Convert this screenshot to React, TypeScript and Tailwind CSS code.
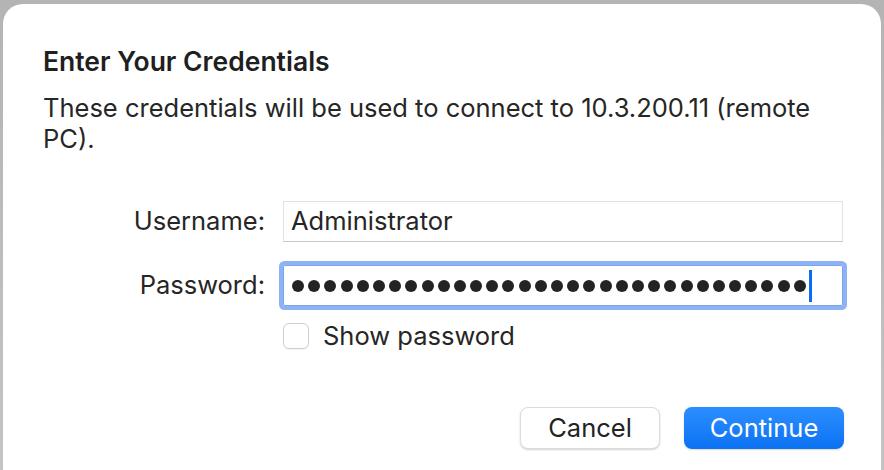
import React from 'react';

const font = { fontFamily: 'Inter, "Liberation Sans", sans-serif' };

const App: React.FC = () => {
  const dots = Array.from({ length: 32 });
  return (
    <div className="w-[884px] h-[470px] bg-gradient-to-b from-[#b4b4b4] to-[#c4c4c4] pt-[4px] px-[3px] overflow-hidden" style={font}>
      <div className="relative h-[480px] bg-white rounded-t-[20px] text-[#262626]">
        <div className="pl-[40px] pt-[41px]">
          <h1 className="text-[26.5px] leading-[32px] font-semibold text-[#1f1f1f]">Enter Your Credentials</h1>
          <p className="mt-[15px] text-[25.5px] leading-[31px] w-[790px]">
            These credentials will be used to connect to 10.3.200.11 (remote PC).
          </p>
        </div>

        <div className="mt-[47px] flex flex-col">
          <div className="flex items-center">
            <label className="w-[262px] text-right text-[25.5px]">Username:</label>
            <div className="ml-[18px] w-[560px] h-[41px] border border-[#e2e2e2] border-b-[#c8c8c8] flex items-center px-[7px] text-[25.5px]">
              Administrator
            </div>
          </div>

          <div className="flex items-center mt-[23px]">
            <label className="w-[262px] text-right text-[25.5px]">Password:</label>
            <div className="ml-[18px] w-[560px] h-[41px] border border-[#7aa5ec] ring-[4px] ring-[#8db3f6] rounded-[2px] flex items-center pl-[8px]">
              <div className="flex gap-[4.2px]">
                {dots.map((_, i) => (
                  <span key={i} className="block w-[12px] h-[12px] rounded-full bg-[#232323]" />
                ))}
              </div>
              <span className="block ml-[3px] w-[3px] h-[32px] bg-[#0a6cf5]" />
            </div>
          </div>

          <div className="flex items-center mt-[11px] ml-[280px]">
            <span className="block w-[26px] h-[26px] rounded-[6px] border border-[#cfcfcf] bg-white shadow-[0_1px_1px_rgba(0,0,0,0.05)]" />
            <span className="ml-[14px] text-[25.5px]">Show password</span>
          </div>
        </div>

        <div className="flex justify-end gap-[24px] mt-[52px] pr-[37px]">
          <button className="w-[140px] h-[42px] rounded-[8px] bg-white border border-[#dcdcdc] shadow-[0_1px_2px_rgba(0,0,0,0.18)] text-[25.5px] text-[#232323]">
            Cancel
          </button>
          <button className="w-[160px] h-[42px] rounded-[8px] bg-gradient-to-b from-[#2b8eff] to-[#0a72f3] shadow-[0_1px_2px_rgba(0,0,0,0.15)] text-[25.5px] text-white">
            Continue
          </button>
        </div>
      </div>
    </div>
  );
};

export default App;
